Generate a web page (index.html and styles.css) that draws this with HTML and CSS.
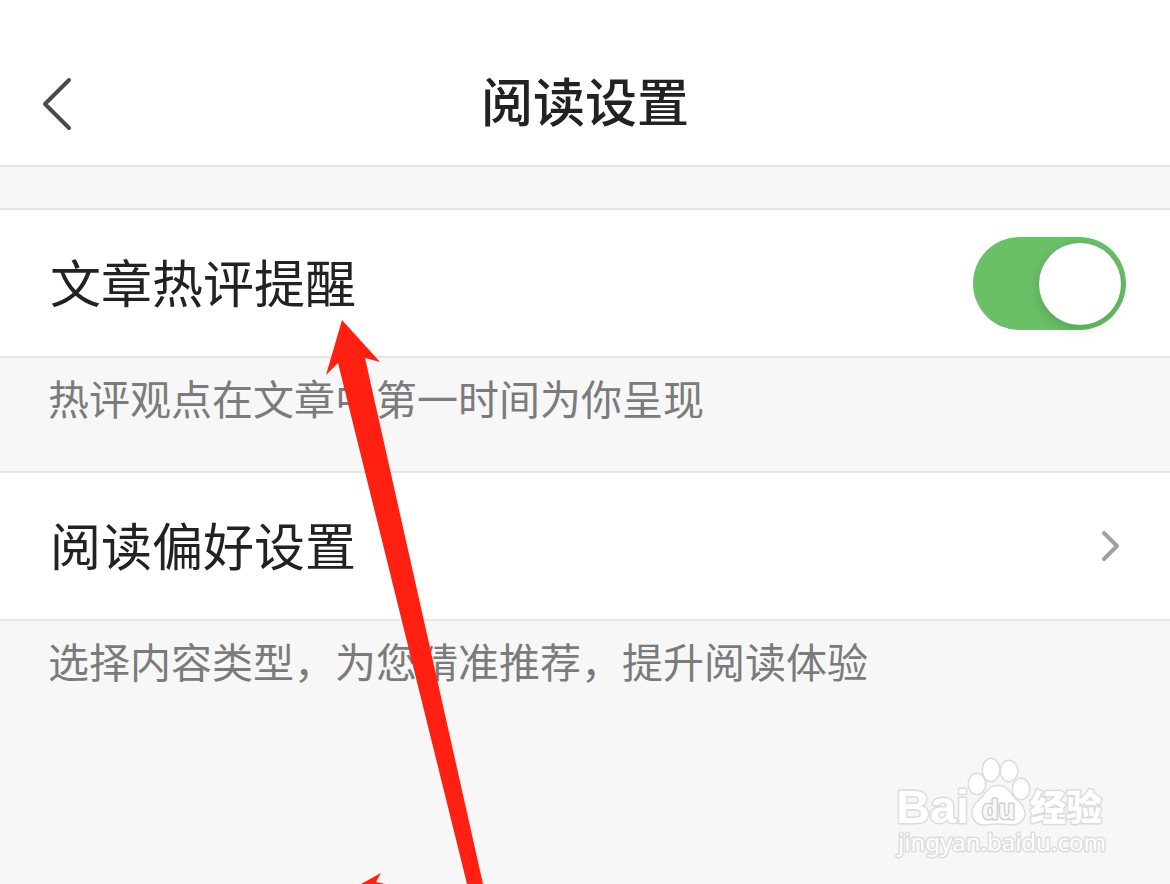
FILE: index.html
```
<!DOCTYPE html>
<html lang="zh-CN">
<head>
    <meta charset="UTF-8">
    <meta name="viewport" content="width=device-width, initial-scale=1.0">
    <title>阅读设置</title>
    <link rel="stylesheet" href="styles.css">
</head>
<body>
    <div class="page">
        <header class="header">
            <button class="back" type="button" aria-label="返回">
                <svg width="32" height="56" viewBox="0 0 32 56"><path d="M29 4 5 28 29 52"/></svg>
            </button>
            <h1>阅读设置</h1>
        </header>

        <main class="settings">
            <div class="row">
                <label for="hotComment">文章热评提醒</label>
                <input class="switch" type="checkbox" id="hotComment" checked>
            </div>
            <p class="hint">热评观点在文章中第一时间为你呈现</p>

            <a class="row" href="#">
                <span>阅读偏好设置</span>
                <svg class="arrow-right" width="28" height="36" viewBox="0 0 28 36"><path d="M6 5 19 18 6 31"/></svg>
            </a>
            <p class="hint">选择内容类型，为您精准推荐，提升阅读体验</p>
        </main>

        <!-- 红色指示箭头 -->
        <svg class="pointer" width="500" height="884" viewBox="0 0 500 884">
            <path d="M342 320 380 362 365 358 483 884H467L338 363 326 375Z"/>
            <path d="M361 884 381 873 376 882 385 884Z"/>
        </svg>

        <!-- 水印 -->
        <svg class="watermark" width="220" height="110" viewBox="0 0 220 110">
            <text class="logo" x="6" y="73">Bai</text>
            <ellipse cx="87" cy="34" rx="8" ry="10"/>
            <ellipse cx="101" cy="20" rx="8" ry="11"/>
            <ellipse cx="119" cy="21" rx="8" ry="10"/>
            <ellipse cx="131" cy="39" rx="8" ry="10"/>
            <path d="M108 36C98 36 96 45 89 51 83 56 82 61 83 66 85 73 91 75 98 74 105 73 112 73 119 74 127 75 133 72 134 65 135 59 131 54 126 50 120 45 118 36 108 36Z"/>
            <text class="du" x="92" y="69">du</text>
            <text class="cn" x="140" y="71">经验</text>
            <text class="url" x="8" y="101">jingyan.baidu.com</text>
        </svg>
    </div>
</body>
</html>
```
FILE: styles.css
```
* {
    box-sizing: border-box;
}
body {
    margin: 0;
    font-family: "Noto Sans CJK SC", sans-serif;
    background-color: #f7f7f7;
    color: #222;
}
.page {
    position: relative;
    min-height: 100vh;
    overflow: hidden;
}
.header {
    display: grid;
    grid-template-columns: 80px 1fr 80px;
    align-items: center;
    padding: 50px 0 15px;
    background-color: #fff;
    border-bottom: 2px solid #e6e6e6;
}
.back {
    justify-self: end;
    display: flex;
    margin-right: 8px;
    padding: 8px 0 0;
    border: none;
    background: none;
    cursor: pointer;
}
svg path {
    stroke-linecap: round;
    stroke-linejoin: round;
}
.back path {
    fill: none;
    stroke: #4a4a4a;
    stroke-width: 4;
}
h1 {
    margin: 0;
    font-size: 52px;
    font-weight: 500;
    line-height: 100px;
    text-align: center;
}
.settings {
    padding-top: 41px;
}
.row {
    display: flex;
    align-items: center;
    justify-content: space-between;
    height: 150px;
    padding: 0 44px 0 50px;
    font-size: 51px;
    color: #222;
    text-decoration: none;
    background-color: #fff;
    border-top: 2px solid #e6e6e6;
    border-bottom: 2px solid #e6e6e6;
}
.row label,
.row span {
    padding-bottom: 4px;
}
.switch {
    appearance: none;
    width: 153px;
    height: 93px;
    margin: 0;
    padding: 6px 5px;
    border-radius: 47px;
    background-color: #ccc;
    cursor: pointer;
}
.switch::before {
    content: "";
    display: block;
    width: 82px;
    height: 82px;
    border-radius: 50%;
    background-color: #fff;
    box-shadow: 0 4px 12px rgba(0,0,0,0.15);
}
.switch:checked {
    background-color: #6abf67;
}
.switch:checked::before {
    margin-left: auto;
}
.arrow-right path {
    fill: none;
    stroke: #a0a0a0;
    stroke-width: 4;
}
.hint {
    margin: 0;
    padding: 8px 48px 43px;
    font-size: 41px;
    line-height: 62px;
    color: #7b7b7b;
}
.pointer {
    position: absolute;
    top: 0;
    left: 0;
    fill: #ff2012;
    pointer-events: none;
}
.watermark {
    position: absolute;
    right: 60px;
    bottom: 24px;
    fill: #fff;
    stroke: #dcdcdc;
    stroke-width: 3;
    stroke-linejoin: round;
    paint-order: stroke;
    pointer-events: none;
}
.logo {
    font: bold 47px "Liberation Sans", sans-serif;
}
.du {
    font: bold 27px "Liberation Sans", sans-serif;
    fill: #f7f7f7;
    stroke: #d0d0d0;
}
.cn {
    font-size: 36px;
    font-weight: 900;
}
.url {
    font: 24px "Noto Sans", sans-serif;
}
```
